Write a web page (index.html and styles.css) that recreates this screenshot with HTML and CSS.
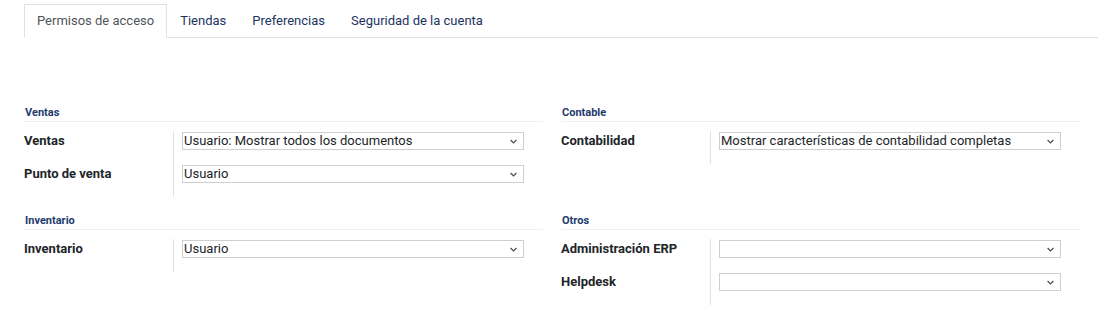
FILE: index.html
```html
<!DOCTYPE html>
<html lang="es">
<head>
<meta charset="utf-8">
<title>Usuario</title>
<link rel="stylesheet" href="styles.css">
</head>
<body>
<div class="page">
  <ul class="tabs">
    <li class="tab active">Permisos de acceso</li>
    <li class="tab">Tiendas</li>
    <li class="tab">Preferencias</li>
    <li class="tab">Seguridad de la cuenta</li>
  </ul>

  <div class="groups">
    <section class="group">
      <div class="group-title">Ventas</div>
      <div class="row">
        <div class="label">Ventas</div>
        <div class="field"><div class="select"><span>Usuario: Mostrar todos los documentos</span><svg class="chev" width="7" height="5" viewBox="0 0 7 5"><path d="M0.6 1 L3.5 3.9 L6.4 1" fill="none" stroke="#4a4a4a" stroke-width="1.2"/></svg></div></div>
      </div>
      <div class="row">
        <div class="label">Punto de venta</div>
        <div class="field"><div class="select"><span>Usuario</span><svg class="chev" width="7" height="5" viewBox="0 0 7 5"><path d="M0.6 1 L3.5 3.9 L6.4 1" fill="none" stroke="#4a4a4a" stroke-width="1.2"/></svg></div></div>
      </div>
    </section>

    <section class="group">
      <div class="group-title">Contable</div>
      <div class="row">
        <div class="label">Contabilidad</div>
        <div class="field"><div class="select"><span>Mostrar características de contabilidad completas</span><svg class="chev" width="7" height="5" viewBox="0 0 7 5"><path d="M0.6 1 L3.5 3.9 L6.4 1" fill="none" stroke="#4a4a4a" stroke-width="1.2"/></svg></div></div>
      </div>
    </section>

    <section class="group">
      <div class="group-title">Inventario</div>
      <div class="row">
        <div class="label">Inventario</div>
        <div class="field"><div class="select"><span>Usuario</span><svg class="chev" width="7" height="5" viewBox="0 0 7 5"><path d="M0.6 1 L3.5 3.9 L6.4 1" fill="none" stroke="#4a4a4a" stroke-width="1.2"/></svg></div></div>
      </div>
    </section>

    <section class="group">
      <div class="group-title">Otros</div>
      <div class="row">
        <div class="label">Administración ERP</div>
        <div class="field"><div class="select"><span></span><svg class="chev" width="7" height="5" viewBox="0 0 7 5"><path d="M0.6 1 L3.5 3.9 L6.4 1" fill="none" stroke="#4a4a4a" stroke-width="1.2"/></svg></div></div>
      </div>
      <div class="row">
        <div class="label">Helpdesk</div>
        <div class="field"><div class="select"><span></span><svg class="chev" width="7" height="5" viewBox="0 0 7 5"><path d="M0.6 1 L3.5 3.9 L6.4 1" fill="none" stroke="#4a4a4a" stroke-width="1.2"/></svg></div></div>
      </div>
    </section>
  </div>
</div>
</body>
</html>
```

FILE: styles.css
```css
* { box-sizing: border-box; }
html, body { margin: 0; padding: 0; background: #fff; }
body {
  font-family: Roboto, "Liberation Sans", sans-serif;
  font-size: 13px;
  color: #212529;
}
.page {
  margin-left: 24px;
  width: 1074px;
  padding-top: 4px;
}
.tabs {
  list-style: none;
  margin: 0;
  padding: 0;
  display: flex;
  border-bottom: 1px solid #dee2e6;
  height: 34px;
}
.tab {
  height: 34px;
  line-height: 32px;
  padding: 0 12px;
  border: 1px solid transparent;
  color: #1c335f;
  font-size: 13px;
}
.tab.active {
  color: #4f5459;
  border-color: #dee2e6 #dee2e6 #fff;
  background: #fff;
}
.groups {
  margin-top: 51px;
  display: grid;
  grid-template-columns: 537px 537px;
  align-items: start;
}
.group {
  padding-right: 18px;
}
.group-title {
  padding-top: 16px;
  height: 33px;
  line-height: 16px;
  padding-left: 1px;
  font-size: 11px;
  font-weight: 700;
  color: #1d3a6d;
  border-bottom: 1px solid #f0f0f0;
  margin-bottom: 9px;
}
.row {
  display: grid;
  grid-template-columns: 149px 1fr;
}
.label {
  padding-top: 1px;
  line-height: 18px;
  font-weight: 700;
  color: #212529;
}
.field {
  border-left: 1px solid #dee2e6;
  padding: 1px 19px 14px 8px;
}
.select {
  height: 18px;
  border: 1px solid #cfcfcf;
  display: flex;
  align-items: center;
  justify-content: space-between;
  padding: 0 6px 0 1px;
  line-height: 16px;
  color: #212529;
}
.chev { display: block; }
```
